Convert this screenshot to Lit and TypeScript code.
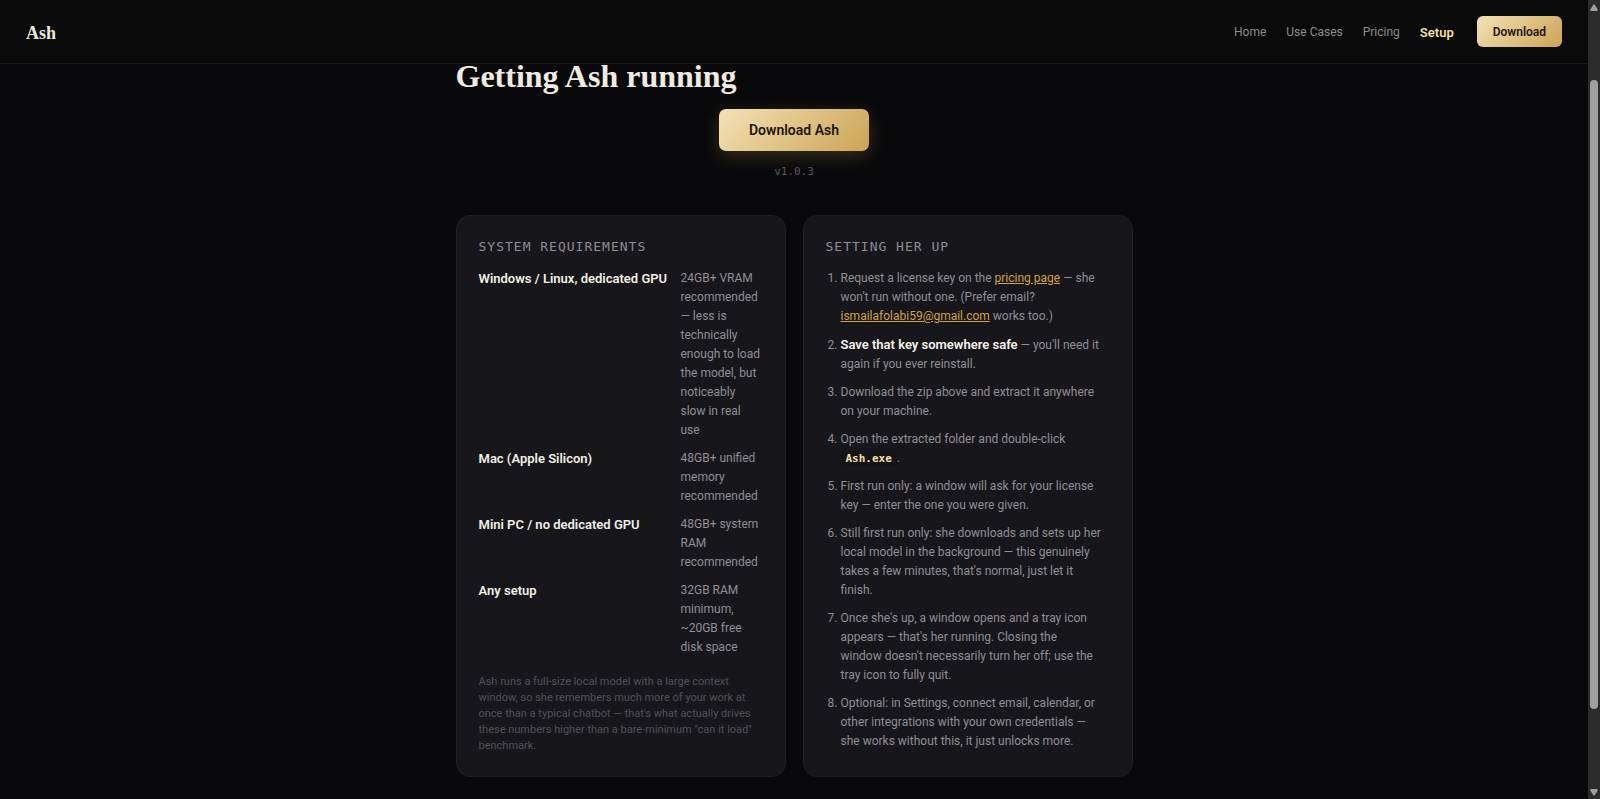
import { LitElement, html, css } from "lit";
import { customElement } from "lit/decorators.js";
import { classMap } from "lit/directives/class-map.js";

const links = ["Home", "Use Cases", "Pricing", "Setup"];

const requirements = [
  {
    name: "Windows / Linux, dedicated GPU",
    need: "24GB+ VRAM recommended — less is technically enough to load the model, but noticeably slow in real use",
  },
  { name: "Mac (Apple Silicon)", need: "48GB+ unified memory recommended" },
  { name: "Mini PC / no dedicated GPU", need: "48GB+ system RAM recommended" },
  { name: "Any setup", need: "32GB RAM minimum, ~20GB free disk space" },
];

const steps = [
  html`Request a license key on the <a class="link" href="#pricing">pricing page</a> — she won't run
    without one. (Prefer email?
    <a class="link" href="mailto:ismailafolabi59@gmail.com">ismailafolabi59@gmail.com</a> works too.)`,
  html`<strong class="strong">Save that key somewhere safe</strong> — you'll need it again if you ever
    reinstall.`,
  html`Download the zip above and extract it anywhere on your machine.`,
  html`Open the extracted folder and double-click <code class="code">Ash.exe</code>.`,
  html`First run only: a window will ask for your license key — enter the one you were given.`,
  html`Still first run only: she downloads and sets up her local model in the background — this
    genuinely takes a few minutes, that's normal, just let it finish.`,
  html`Once she's up, a window opens and a tray icon appears — that's her running. Closing the
    window&nbsp;doesn't necessarily turn her off; use the tray&nbsp;icon to fully quit.`,
  html`Optional: in Settings, connect email, calendar, or other integrations with your own credentials
    — she works without this, it just unlocks more.`,
];

@customElement("app-root")
export class AppRoot extends LitElement {
  static styles = css`
    :host {
      display: flex;
      min-height: 100vh;
      background: #09090b;
      color: #918d94;
      font-family: Roboto, "Noto Sans", sans-serif;
      font-size: 12px;
      line-height: 19px;
    }
    *,
    *::before {
      box-sizing: border-box;
    }
    .page {
      position: relative;
      flex: 1;
      min-width: 0;
    }
    .header {
      position: absolute;
      inset: 0 0 auto;
      display: flex;
      align-items: center;
      justify-content: space-between;
      height: 64px;
      padding: 0 26px;
      border-bottom: 1px solid #1a1a1b;
      background: #0a0a0a;
    }
    .brand {
      padding-top: 2px;
      color: #ece7dc;
      font: bold 18px/24px "Liberation Serif", serif;
      text-decoration: none;
    }
    .nav {
      display: flex;
      align-items: center;
      gap: 20px;
    }
    .item {
      padding-top: 2px;
      color: #8f8c90;
      text-decoration: none;
    }
    .item.current {
      color: #f1dfa8;
      font-size: 13px;
      font-weight: 600;
    }
    .button {
      border: 0;
      border-radius: 6px;
      background: linear-gradient(135deg, #f3e2b6, #cca356);
      color: #1c160c;
      font-family: inherit;
      font-weight: 600;
      cursor: pointer;
    }
    .small {
      height: 31px;
      padding: 0 16px;
      margin-left: 3px;
      font-size: 12px;
    }
    .large {
      height: 42px;
      padding: 0 30px;
      border-radius: 7px;
      font-size: 14px;
      box-shadow: 0 5px 18px rgba(204, 163, 86, 0.24);
    }
    .main {
      max-width: 677px;
      margin: 0 auto;
      padding: 58px 0 22px;
    }
    .title {
      margin: 0 0 15px;
      color: #f0ebe0;
      font: bold 32px/36px "Liberation Serif", serif;
    }
    .get {
      display: flex;
      flex-direction: column;
      align-items: center;
      gap: 13px;
      margin-bottom: 35px;
    }
    .version {
      color: #5a575f;
      font: 11px/16px "DejaVu Sans Mono", monospace;
    }
    .cards {
      display: grid;
      grid-template-columns: 1fr 1fr;
      gap: 17px;
    }
    .card {
      padding: 23px 22px 22px;
      border: 1px solid #202023;
      border-radius: 14px;
      background: #17171b;
    }
    .heading {
      margin: 0 0 14px;
      color: #8f8b92;
      font: 13px/16px "DejaVu Sans Mono", monospace;
      letter-spacing: 1px;
      text-transform: uppercase;
    }
    .specs {
      display: grid;
      grid-template-columns: 1fr 82px;
      gap: 9px 12px;
      margin: 0;
    }
    .name {
      color: #f2eee4;
      font-size: 13px;
      font-weight: 600;
    }
    .need {
      margin: 0;
      padding-right: 1px;
    }
    .note {
      margin: 17px 0 0;
      color: #535058;
      font-size: 11px;
      line-height: 16px;
    }
    .steps {
      display: flex;
      flex-direction: column;
      gap: 9px;
      margin: 0;
      padding: 0 5px 0 15px;
    }
    .link {
      color: #d3a046;
      text-decoration: underline;
    }
    .strong {
      color: #f6f3ec;
      font-size: 13px;
      font-weight: 600;
    }
    .code {
      padding: 1px 5px;
      border-radius: 4px;
      background: #141417;
      color: #f1dfa8;
      font: bold 11px/16px "DejaVu Sans Mono", monospace;
    }
    .scrollbar {
      display: flex;
      flex-direction: column;
      align-items: center;
      width: 12px;
      padding: 4px 0 3px;
      background: #2c2c2c;
    }
    .arrow {
      width: 8px;
      height: 7px;
      fill: #9f9f9f;
    }
    .before {
      flex: 69;
    }
    .thumb {
      flex: 629;
      width: 8px;
      border-radius: 4px;
      background: #9f9f9f;
    }
    .after {
      flex: 80;
    }
  `;

  render() {
    return html`
      <div class="page">
        <main class="main">
          <h1 class="title">Getting Ash running</h1>
          <div class="get">
            <button class="button large">Download Ash</button>
            <span class="version">v1.0.3</span>
          </div>
          <div class="cards">
            <section class="card">
              <h2 class="heading">System requirements</h2>
              <dl class="specs">
                ${requirements.map(
                  (r) => html`<dt class="name">${r.name}</dt><dd class="need">${r.need}</dd>`
                )}
              </dl>
              <p class="note">
                Ash runs a full-size local model with a large context window, so she remembers much more
                of your work at once than a typical chatbot — that's what actually drives these numbers
                higher than a bare-minimum "can it load" benchmark.
              </p>
            </section>
            <section class="card">
              <h2 class="heading">Setting her up</h2>
              <ol class="steps">
                ${steps.map((s) => html`<li>${s}</li>`)}
              </ol>
            </section>
          </div>
        </main>
        <header class="header">
          <a class="brand" href="#home">Ash</a>
          <nav class="nav">
            ${links.map(
              (l) => html`<a class=${classMap({ item: true, current: l === "Setup" })} href="#">${l}</a>`
            )}
            <button class="button small">Download</button>
          </nav>
        </header>
      </div>
      <div class="scrollbar" aria-hidden="true">
        <svg class="arrow" viewBox="0 0 8 7"><path d="M3 1.2Q4-.6 5 1.2L7.7 5.6Q8 7 7 7H1Q0 7 .3 5.6Z" /></svg>
        <span class="before"></span>
        <span class="thumb"></span>
        <span class="after"></span>
        <svg class="arrow" viewBox="0 0 8 7"><path d="M3 5.8Q4 7.6 5 5.8L7.7 1.4Q8 0 7 0H1Q0 0 .3 1.4Z" /></svg>
      </div>
    `;
  }
}
